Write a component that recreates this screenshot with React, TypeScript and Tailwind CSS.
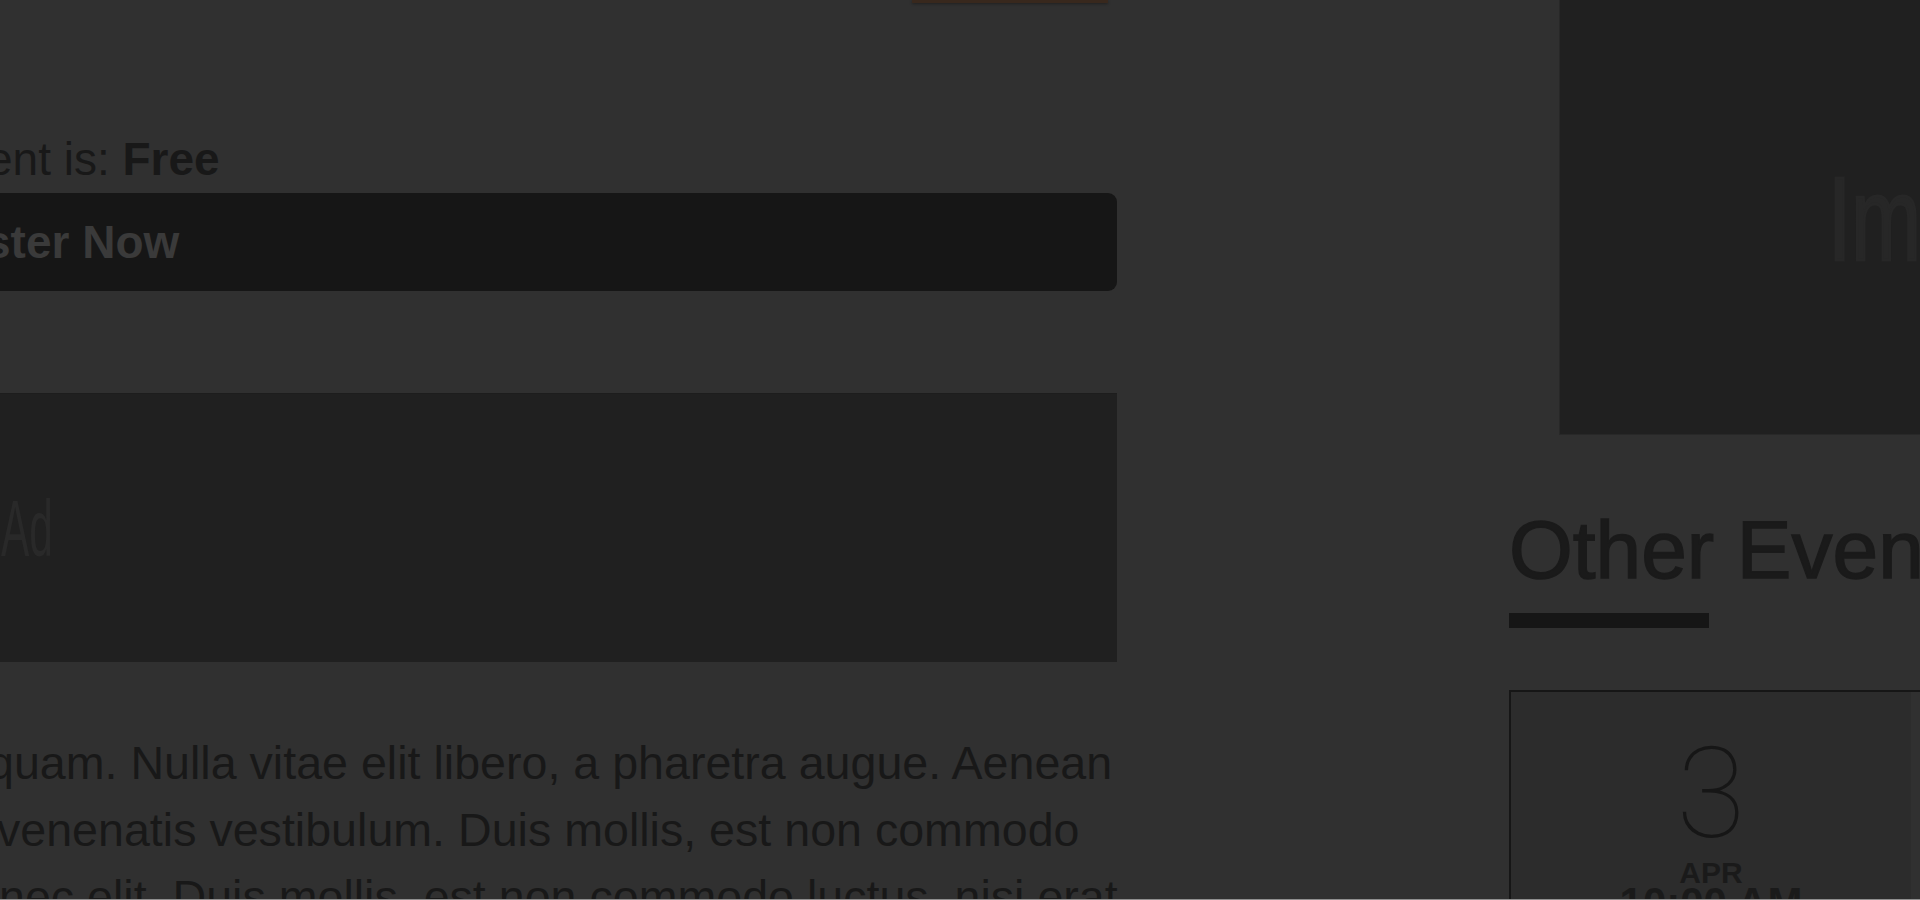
import React from "react";

const lines = [
    { text: "quam. Nulla vitae elit libero, a pharetra augue. Aenean", pad: "pl-[28px]" },
    { text: "venenatis vestibulum. Duis mollis, est non commodo", pad: "pl-[37px]" },
    { text: "nec elit. Duis mollis, est non commodo luctus, nisi erat", pad: "pl-[39px]" },
];

const EventCard: React.FC = () => (
    <div className="flex w-[600px] border-2 border-[#161616]">
        <div className="flex w-[400px] shrink-0 flex-col items-center bg-[#2c2c2c] pt-[39px]">
            <span className="font-['Roboto','Inter',sans-serif] text-[126px] font-thin leading-none text-[#161616]">
                3
            </span>
            <span className="mt-[2px] font-['Liberation_Sans',Arial,sans-serif] text-[30px] font-bold leading-[28px] text-[#1a1a1a]">
                APR
            </span>
            <span className="-mt-[5px] font-['Liberation_Sans',Arial,sans-serif] text-[42px] font-bold leading-[42px] text-[#1a1a1a]">
                10:00 AM
            </span>
        </div>
        <div className="flex-1" />
    </div>
);

export default function App() {
    return (
        <div className="flex h-[900px] w-full flex-col overflow-hidden bg-[#303030] font-['Liberation_Sans',Arial,sans-serif]">
            <div className="flex h-[899px] overflow-hidden">
                <main className="-ml-[40px] w-[1157px] shrink-0">
                    <div className="ml-[952px] h-[3px] w-[196px] bg-[#38281d] shadow-[0_1px_3px_rgba(0,0,0,0.35)]" />
                    <p className="mt-[123px] whitespace-nowrap pl-[27px] text-[46px] leading-[67px] text-[#181818]">
                        ent is: <strong className="font-bold">Free</strong>
                    </p>
                    <button className="flex h-[98px] w-full items-center whitespace-nowrap rounded-[9px] bg-[#161616] pl-[25px] text-[46px] font-bold leading-[46px] text-[#3a3a3a]">
                        ster Now
                    </button>
                    <div className="mt-[102px] h-[269px] w-full border-t border-[#1d1d1d] bg-[#202020] pl-[41px] pt-[95px]">
                        <span className="inline-block origin-left scale-x-[0.53] text-[80px] leading-none text-[#292929]">
                            Ad
                        </span>
                    </div>
                    <div className="mt-[68px] text-[46.6px] leading-[67px] text-[#181818]">
                        {lines.map((line, i) => (
                            <div key={i} className={`whitespace-nowrap ${line.pad}`}>
                                {line.text}
                            </div>
                        ))}
                    </div>
                </main>
                <aside className="ml-[392px] w-[620px] shrink-0">
                    <div className="ml-[50px] h-[435px] w-[762px] border-b border-l border-[#282828] bg-[#202020] pl-[268px] pt-[160px]">
                        <span className="inline-block origin-left scale-x-[0.71] text-[118px] leading-none text-[#272727] [-webkit-text-stroke:3px_#272727]">
                            Image
                        </span>
                    </div>
                    <h2 className="mt-[74px] whitespace-nowrap text-[82px] leading-none text-[#1a1a1a] [-webkit-text-stroke:1.5px_#1a1a1a]">
                        Other Events
                    </h2>
                    <div className="mt-[22px] h-[15px] w-[200px] bg-[#161616]" />
                    <div className="mt-[62px]">
                        <EventCard />
                    </div>
                </aside>
            </div>
            <div className="h-px w-full bg-[#8f8f8f]" />
        </div>
    );
}
